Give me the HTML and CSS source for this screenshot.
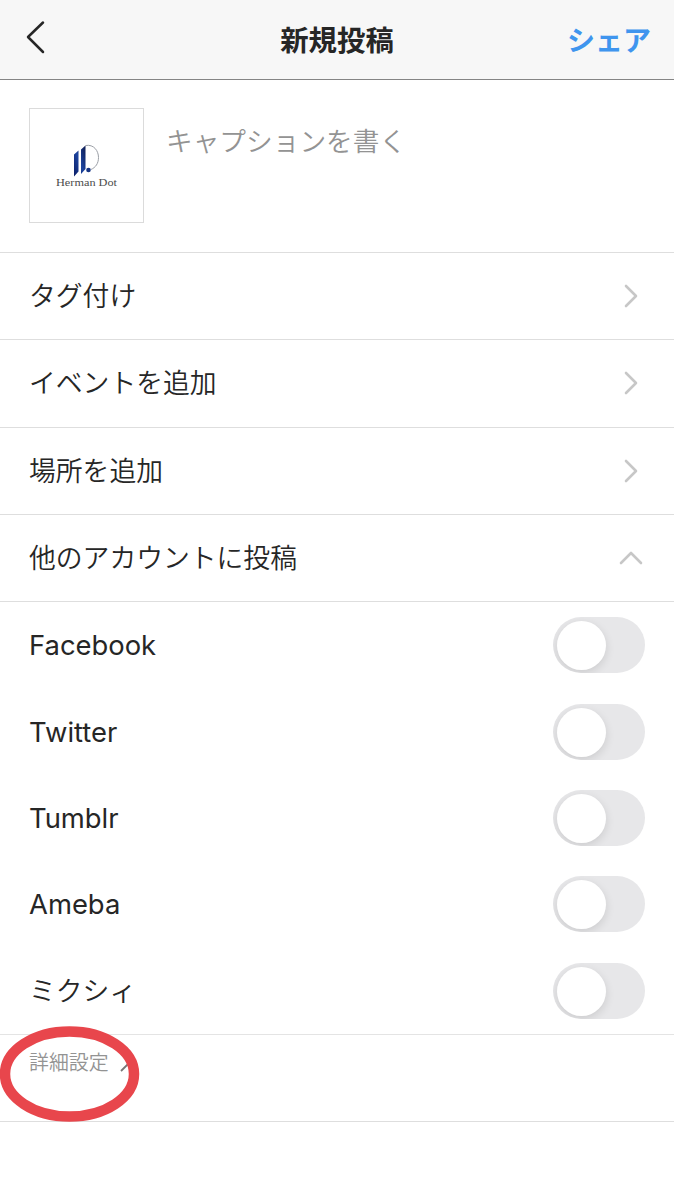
FILE: index.html
```html
<!DOCTYPE html>
<html lang="ja">
<head>
<meta charset="utf-8">
<title>新規投稿</title>
<link rel="stylesheet" href="styles.css">
</head>
<body>
<header class="navbar">
  <svg class="back" width="20" height="34" viewBox="0 0 20 34" fill="none" stroke="#262626" stroke-width="2.5" stroke-linecap="round" stroke-linejoin="round"><path d="M17 2.5 2 17 17 32"/></svg>
  <h1 class="title">新規投稿</h1>
  <span class="share">シェア</span>
</header>
<main>
  <section class="compose">
    <div class="thumb">
      <svg width="113" height="113" viewBox="0 0 113 113">
        <defs><linearGradient id="ink" x1="0" y1="1" x2="1" y2="0"><stop offset="0" stop-color="#0c1e66"/><stop offset=".5" stop-color="#1c449f"/><stop offset="1" stop-color="#101c50"/></linearGradient></defs>
        <path d="M44 45.500 48.500 41.500V62.500L44 67.500ZM51 40.500 55.500 36.500V60L51 65Z" fill="url(#ink)"/>
        <path d="M55.500 36.500C64 35 68.500 42 68.500 48.500C68.500 54.500 65.500 58.500 61 60.500" fill="none" stroke="#9b9fa6" stroke-width="1"/>
        <circle cx="58.500" cy="61" r="2.300" fill="#173584"/>
        <text class="brand" x="26" y="76.500" textLength="61" lengthAdjust="spacingAndGlyphs">Herman Dot</text>
      </svg>
    </div>
    <p class="caption">キャプションを書く</p>
  </section>
  <div class="row"><span>タグ付け</span><svg class="chevron" width="14" height="24" viewBox="0 0 14 24"><path d="M2 2 12 12 2 22"/></svg></div>
  <div class="row"><span>イベントを追加</span><svg class="chevron" width="14" height="24" viewBox="0 0 14 24"><path d="M2 2 12 12 2 22"/></svg></div>
  <div class="row"><span>場所を追加</span><svg class="chevron" width="14" height="24" viewBox="0 0 14 24"><path d="M2 2 12 12 2 22"/></svg></div>
  <div class="row"><span>他のアカウントに投稿</span><svg class="chevron up" width="24" height="14" viewBox="0 0 24 14"><path d="M2 12 12 2 22 12"/></svg></div>
  <section class="services">
    <div class="service"><span class="latin">Facebook</span><span class="switch"><span class="knob"></span></span></div>
    <div class="service"><span class="latin">Twitter</span><span class="switch"><span class="knob"></span></span></div>
    <div class="service"><span class="latin">Tumblr</span><span class="switch"><span class="knob"></span></span></div>
    <div class="service"><span class="latin">Ameba</span><span class="switch"><span class="knob"></span></span></div>
    <div class="service"><span class="kana">ミクシィ</span><span class="switch"><span class="knob"></span></span></div>
  </section>
  <section class="advanced">
    <span>詳細設定</span>
    <svg class="more" width="16" height="10" viewBox="0 0 16 10"><path d="M1 9 9 1 15 7"/></svg>
    <svg class="ring" width="140" height="98" viewBox="0 0 140 98"><ellipse cx="69.500" cy="49" rx="64.500" ry="42.500"/></svg>
  </section>
</main>
</body>
</html>
```
FILE: styles.css
```css
* { box-sizing: border-box; }
body {
  margin: 0;
  background: #fff;
  color: #262626;
  font-family: "Noto Sans CJK JP", sans-serif;
  font-size: 26.8px;
  font-weight: 350;
  line-height: 40px;
}
.navbar {
  display: grid;
  grid-template-columns: 1fr auto 1fr;
  align-items: center;
  height: 80px;
  padding: 0 23px 0 26px;
  background: #f7f7f7;
  border-bottom: 1px solid #858585;
}
.back { margin-top: -6px; }
.title { margin: -2px 3px 0 0; font-size: 28.4px; font-weight: 700; }
.share { justify-self: end; margin-top: -2px; color: #3f95ee; font-size: 28px; font-weight: 700; }
.compose {
  display: flex;
  gap: 22px;
  height: 173px;
  padding: 28px 29px;
  border-bottom: 1px solid #dedede;
}
.thumb { width: 115px; height: 115px; border: 1px solid #dbdbdb; }
.thumb svg { display: block; }
.brand { font-family: "Liberation Serif", serif; font-size: 11px; fill: #4c4c4c; }
.caption { margin: 12px 0 0; color: #939393; font-size: 26.7px; }
.row {
  display: flex;
  align-items: center;
  justify-content: space-between;
  height: 87.25px;
  padding: 0 36px 0 29px;
  border-bottom: 1px solid #dedede;
}
.row span { padding-bottom: 2px; }
.chevron { fill: none; stroke: #c7c7c7; stroke-width: 2.6; stroke-linecap: round; stroke-linejoin: round; }
.up { margin-right: -5px; }
.services { border-bottom: 1px solid #e4e4e4; }
.service {
  display: flex;
  align-items: center;
  justify-content: space-between;
  height: 86.4px;
  padding: 0 29px;
}
.latin { font-family: Inter, sans-serif; font-size: 27.4px; font-weight: 400; }
.kana { padding-bottom: 2px; }
.switch {
  width: 92px;
  height: 56px;
  padding: 4px;
  border-radius: 28px;
  background: #e7e7e9;
  overflow: hidden;
}
.knob {
  display: block;
  width: 49px;
  height: 49px;
  border-radius: 50%;
  background: #fff;
  box-shadow: 0 3px 10px rgba(0, 0, 0, .12);
}
.advanced {
  position: relative;
  display: flex;
  align-items: flex-start;
  gap: 11px;
  height: 87px;
  padding: 7px 29px;
  border-bottom: 1px solid #dedede;
  color: #939393;
  font-size: 19.9px;
}
.more { margin-top: 20px; fill: none; stroke: #777; stroke-width: 1.8; }
.ring { position: absolute; left: 0; top: -10px; fill: none; stroke: #e8464c; stroke-width: 10.500; }
```
